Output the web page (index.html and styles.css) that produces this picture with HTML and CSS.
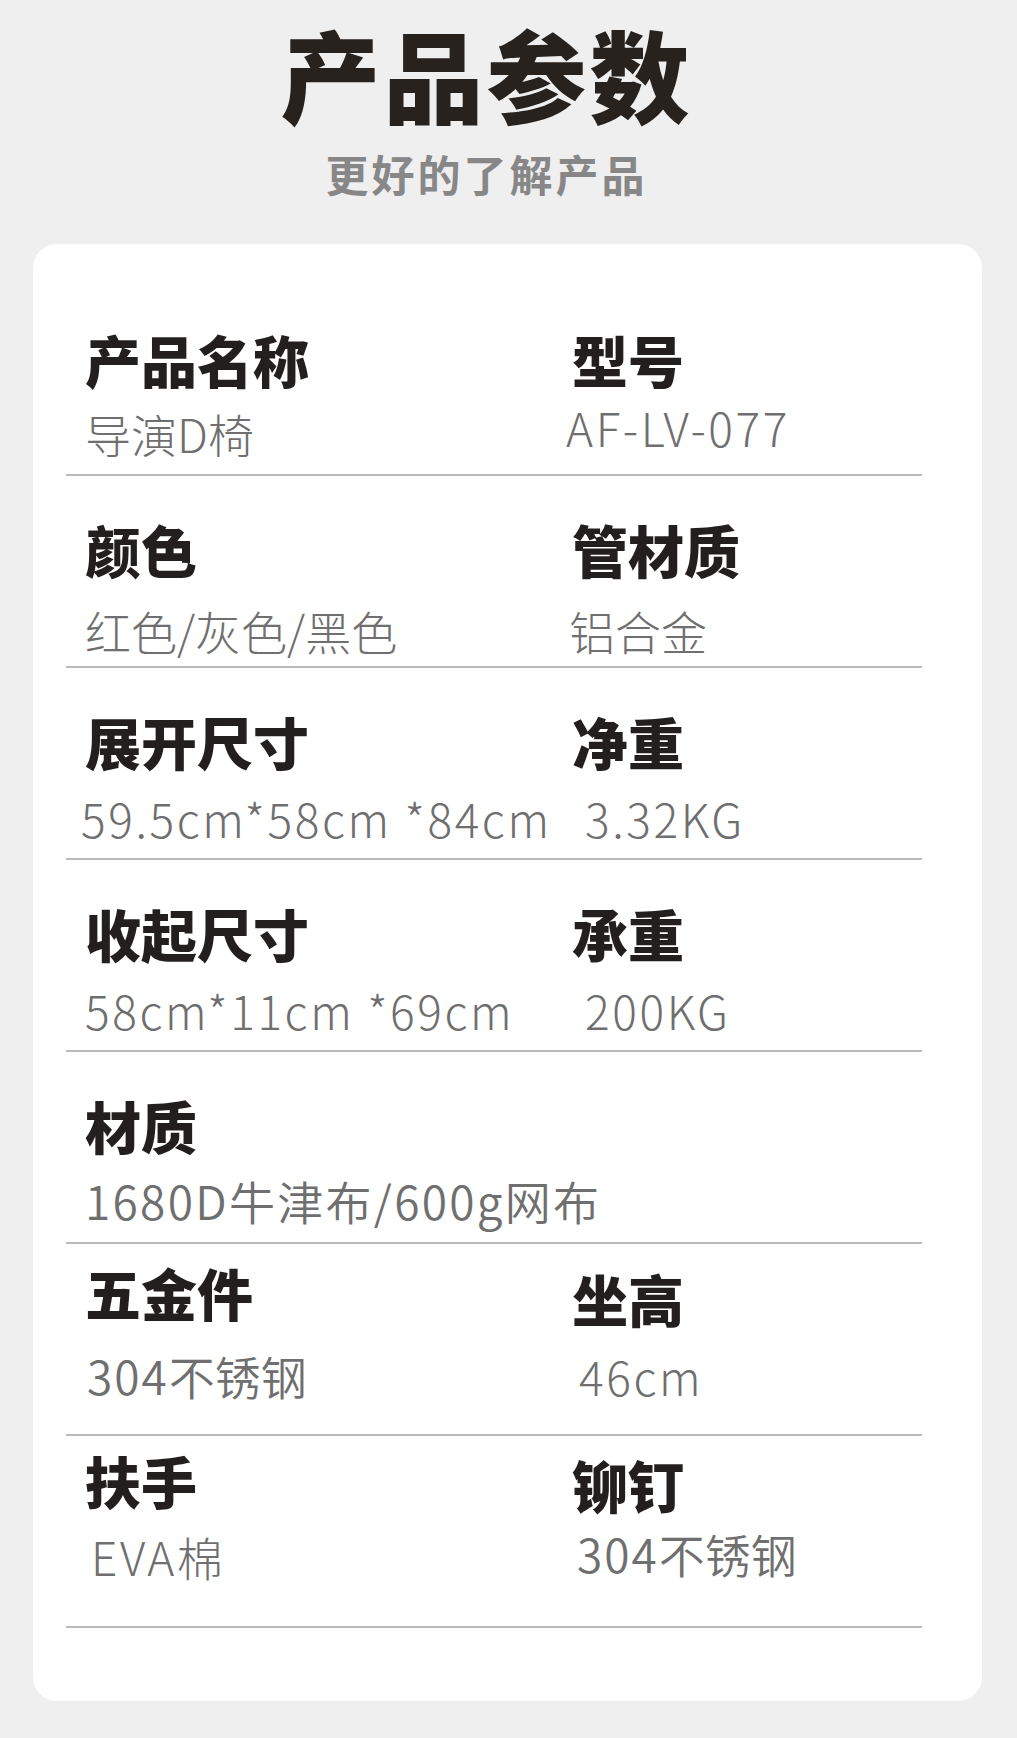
FILE: index.html
```html
<!DOCTYPE html>
<html lang="zh-CN">
<head>
<meta charset="utf-8">
<title>产品参数</title>
<link rel="stylesheet" href="styles.css">
</head>
<body>
<header class="header">
  <h1 class="title">产品参数</h1>
  <p class="subtitle">更好的了解产品</p>
</header>
<section class="card">
  <div class="row row-first">
    <div class="cell"><div class="label">产品名称</div><div class="value">导演D椅</div></div>
    <div class="cell"><div class="label">型号</div><div class="value shift-n6 raise"><span class="lat">AF-LV-077</span></div></div>
  </div>
  <div class="row row-2">
    <div class="cell"><div class="label">颜色</div><div class="value">红色/灰色/黑色</div></div>
    <div class="cell"><div class="label">管材质</div><div class="value shift-n3">铝合金</div></div>
  </div>
  <div class="row">
    <div class="cell"><div class="label">展开尺寸</div><div class="value shift-n4"><span class="lat">59.5cm*58cm *84cm</span></div></div>
    <div class="cell"><div class="label">净重</div><div class="value shift-13"><span class="lat">3.32KG</span></div></div>
  </div>
  <div class="row">
    <div class="cell"><div class="label">收起尺寸</div><div class="value"><span class="lat">58cm*11cm *69cm</span></div></div>
    <div class="cell"><div class="label">承重</div><div class="value shift-13"><span class="lat">200KG</span></div></div>
  </div>
  <div class="row row-5">
    <div class="cell"><div class="label">材质</div><div class="value value-reg value-wide">1680D牛津布/600g网布</div></div>
  </div>
  <div class="row row-6">
    <div class="cell"><div class="label">五金件</div><div class="value value-reg shift-2"><span class="lat-narrow">304</span>不锈钢</div></div>
    <div class="cell cell-low"><div class="label">坐高</div><div class="value shift-7"><span class="lat">46cm</span></div></div>
  </div>
  <div class="row row-7">
    <div class="cell"><div class="label">扶手</div><div class="value shift-6"><span class="lat">EVA</span>棉</div></div>
    <div class="cell cell-tight"><div class="label">铆钉</div><div class="value value-reg shift-5"><span class="lat-narrow">304</span>不锈钢</div></div>
  </div>
</section>
</body>
</html>
```

FILE: styles.css
```css
html, body {
  margin: 0;
  padding: 0;
}

body {
  width: 1017px;
  min-height: 1738px;
  background: #efefef;
  font-family: "Noto Sans CJK SC", "Noto Sans", sans-serif;
}

.header {
  display: flex;
  flex-direction: column;
  align-items: center;
  padding: 23px 50px 0 0;
}

.title {
  margin: 0 0 0 6px;
  font-size: 100px;
  line-height: 1;
  font-weight: 900;
  letter-spacing: 3px;
  color: #28221f;
}

.subtitle {
  margin: 29px 0 0 6px;
  font-size: 43px;
  line-height: 1;
  font-weight: 700;
  letter-spacing: 3px;
  color: #878787;
}

.card {
  margin: 49px 35px 39px 33px;
  background: #ffffff;
  border-radius: 24px;
  padding: 0 60px 73px 33px;
}

.row {
  display: grid;
  grid-template-columns: 487px 1fr;
  align-items: start;
  box-sizing: border-box;
  height: 192px;
  padding: 45px 0 0 19px;
  border-bottom: 2px solid #b9b9b9;
}

.row-first {
  height: 232px;
  padding-top: 87px;
}

.cell {
  display: flex;
  flex-direction: column;
  align-items: flex-start;
  gap: 26px;
}

.row-first .cell {
  gap: 23px;
}

.row-2 .cell {
  gap: 30px;
}

.row-5 .cell {
  gap: 24px;
}

.row-6 {
  padding-top: 20px;
}

.row-6 .cell {
  gap: 32px;
}

.row-6 .cell-low .label {
  margin-top: 6px;
}

.row-6 .cell-low {
  gap: 27px;
}

.row-7 {
  padding-top: 16px;
}

.row-7 .cell {
  gap: 25px;
}

.row-7 .cell-tight {
  gap: 18px;
}

.row-7 .cell-tight .label {
  margin-top: 4px;
}

.label {
  font-size: 56px;
  line-height: 1;
  font-weight: 900;
  color: #231f1e;
  white-space: nowrap;
}

.value {
  font-size: 46px;
  line-height: 1;
  font-weight: 300;
  color: #6f6f6f;
  white-space: nowrap;
}

.value-reg {
  font-weight: 350;
}

.value-wide {
  letter-spacing: 2.3px;
}

.lat {
  letter-spacing: 2.6px;
}

.lat-narrow {
  letter-spacing: 2px;
}

.raise {
  margin-top: -6px;
}

.shift-n6 { margin-left: -6px; }
.shift-n4 { margin-left: -4px; }
.shift-n3 { margin-left: -3px; }
.shift-2 { margin-left: 2px; }
.shift-5 { margin-left: 5px; }
.shift-6 { margin-left: 6px; }
.shift-7 { margin-left: 7px; }
.shift-13 { margin-left: 13px; }
```
